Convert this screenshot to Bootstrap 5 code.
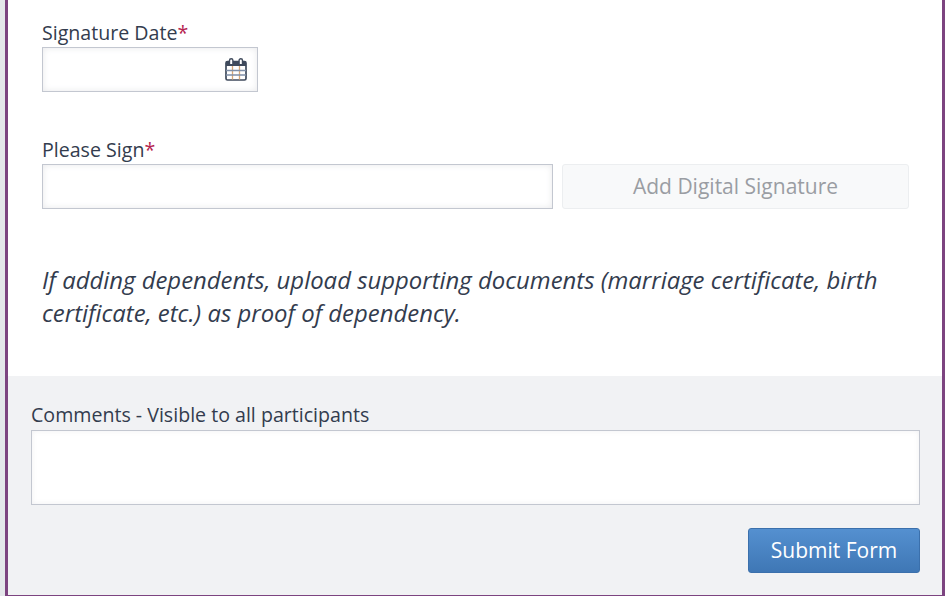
<!DOCTYPE html>
<html lang="en">
<head>
<meta charset="utf-8">
<title>Form</title>
<link href="https://cdn.jsdelivr.net/npm/bootstrap@5.3.0/dist/css/bootstrap.min.css" rel="stylesheet">
<style>
html,body{height:596px;overflow:hidden;margin:0}
body{background:#e4e7ea;font-family:"Open Sans",sans-serif;color:#333c4e;padding-left:5px}
.form-shell{width:940px;height:596px;background:#fff;border:solid #7c4480;border-width:0 3px 1px 3px;display:flex;flex-direction:column}
.top-area{height:376px;padding:19px 34px 0 34px;flex:none}
.bottom-area{flex:1;background:#f1f2f4;padding:25px 22px 0 23px}
.fld-label{font-size:19.6px;line-height:28px;margin:0;display:block}
.req{color:#b5234f}
.inp-box{height:45px;border:1px solid #c3c7d0;background:#fff;box-shadow:inset 0 0 6px rgba(120,125,140,.18)}
.date-box{width:216px;padding-right:10px}
.sign-row{margin-top:44px}
.sign-inp{width:511px;flex:none}
.btn.sign-btn:disabled{width:347px;height:45px;margin-left:9px;background:#f8f9fa;border:1px solid #eceef0;border-radius:3px;color:#9a9da3;font-size:21px;padding:1px 0 0;opacity:1;flex:none}
.note-text{font-size:23.9px;line-height:33px;font-style:italic;margin:54px 0 0;color:#333c4e}
.comment-label{font-size:19.6px;line-height:28px;display:block;margin:0 0 1px}
.comment-box{height:75px;border:1px solid #c3c7d0;background:#fff;box-shadow:inset 0 0 5px rgba(120,125,140,.12)}
.submit-row{margin-top:23px}
.submit-btn{width:172px;height:45px;padding:0;font-size:21px;color:#fff;border:1px solid #3b70ac;border-radius:3px;background:linear-gradient(#5490d0,#3f77b5)}
</style>
</head>
<body>
<div class="form-shell">
  <div class="top-area">
    <label class="fld-label">Signature Date<span class="req">*</span></label>
    <div class="inp-box date-box d-flex align-items-center justify-content-end">
      <svg width="22" height="23" viewBox="0 0 22 23" aria-hidden="true">
        <path d="M1 4.500a1.500 1.500 0 0 1 1.500-1.500H19.500A1.500 1.500 0 0 1 21 4.500V8H1z" fill="#3f4a5c"/>
        <rect x="1" y="3.500" width="20" height="18.500" rx="1.500" fill="none" stroke="#3f4a5c" stroke-width="1.700"/>
        <path d="M7.500 8v13.500M14.500 8v13.500" stroke="#d9a878" stroke-width="1.300" fill="none"/>
        <path d="M1 12.500h20M1 17h20" stroke="#7f8fa8" stroke-width="1.300" fill="none"/>
        <path d="M4.500 6V2.500a1.700 1.700 0 0 1 3.400 0V6M14.100 6V2.500a1.700 1.700 0 0 1 3.400 0V6" fill="#fff" stroke="#3f4a5c" stroke-width="1.400"/>
      </svg>
    </div>
    <div class="sign-row">
      <label class="fld-label">Please Sign<span class="req">*</span></label>
      <div class="d-flex">
        <div class="inp-box sign-inp"></div>
        <button type="button" class="btn sign-btn" disabled>Add Digital Signature</button>
      </div>
    </div>
    <p class="note-text">If adding dependents, upload supporting documents (marriage certificate, birth certificate, etc.) as proof of dependency.</p>
  </div>
  <div class="bottom-area">
    <label class="comment-label">Comments - Visible to all participants</label>
    <div class="comment-box"></div>
    <div class="submit-row d-flex justify-content-end">
      <button type="button" class="btn submit-btn">Submit Form</button>
    </div>
  </div>
</div>
</body>
</html>
